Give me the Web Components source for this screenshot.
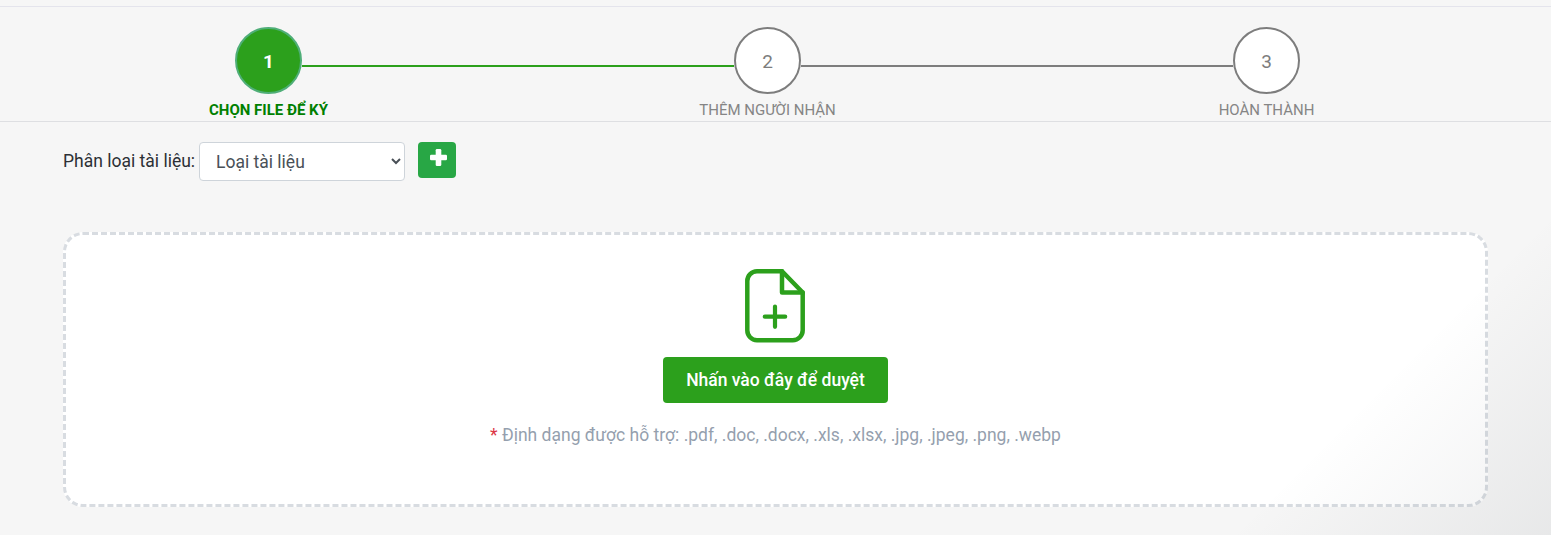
<!DOCTYPE html>
<html lang="vi"><head><meta charset="utf-8"><title>Chọn file để ký</title>
<style>
html,body{margin:0;padding:0;height:535px;overflow:hidden;background:#f6f6f6;font-family:Roboto,"Noto Sans",sans-serif}
</style></head><body>
<app-page>
  <step-bar></step-bar>
  <doc-type></doc-type>
  <drop-zone></drop-zone>
</app-page>
<script>
function def(name,html){customElements.define(name,class extends HTMLElement{constructor(){super();this.attachShadow({mode:'open'}).innerHTML=html}})}
def('app-page',`<style>:host{display:block;position:relative;height:535px;box-sizing:border-box;padding-top:6px;overflow:hidden}
.shade{position:absolute;left:0;top:0;right:0;bottom:0;pointer-events:none;background:linear-gradient(135deg,rgba(0,0,0,0) 0,rgba(0,0,0,0) 84.5%,rgba(30,40,50,.065) 100%)}</style><slot></slot><div class="shade"></div>`);
customElements.define('step-bar',class extends HTMLElement{constructor(){super();
const s=[['1','CHỌN FILE ĐỂ KÝ',1],['2','THÊM NGƯỜI NHẬN',0],['3','HOÀN THÀNH',0]];
this.attachShadow({mode:'open'}).innerHTML=`<style>
:host{display:block;height:116px;box-sizing:border-box;border-top:1px solid #e4e4ec;border-bottom:1px solid #dedfe2;padding:20px 36px 0 18px}
.track{display:flex;align-items:center;padding:0 215px 0 217px;height:67px}
.c{flex:none;width:67px;height:67px;box-sizing:border-box;border:2px solid #7d7d7d;border-radius:50%;background:#fff;color:#7d7d7d;font-size:19px;display:flex;align-items:center;justify-content:center;padding-top:2px}
.c.on{background:#2ca01c;border-color:#4fae78;color:#fff;font-weight:700}
.l{flex:1;height:2px;background:#7d7d7d;margin-top:11px;align-self:center}
.l.on{background:#2ca01c}
.labels{display:grid;grid-template-columns:repeat(3,499px);margin:7px 0 0 1px}
.t{text-align:center;font-size:15px;line-height:18px;color:#858585}
.t.on{color:green;font-weight:700}
</style><div class="track">
<div class="c on">1</div><div class="l on"></div><div class="c">2</div><div class="l"></div><div class="c">3</div></div>
<div class="labels">${s.map(x=>`<div class="t ${x[2]?'on':''}">${x[1]}</div>`).join('')}</div>`}});
def('doc-type',`<style>:host{display:flex;align-items:flex-start;height:110px;box-sizing:border-box;padding:20px 0 0 63px;color:#2c3035;font-size:17.5px}
label{line-height:39px;margin-right:4px;width:132px;white-space:nowrap}
select{width:206px;height:39px;box-sizing:border-box;border:1px solid #ced4da;border-radius:4px;background:#fff;color:#495057;font:17.5px Roboto,sans-serif;padding:6px 12px;margin:0}
button{margin-left:13px;width:38px;height:36px;border:0;border-radius:4px;background:#28a745;display:flex;align-items:center;justify-content:center;padding:0 0 5px 2px}
</style><label>Phân loại tài liệu:</label><select><option>Loại tài liệu</option></select>
<button aria-label="Thêm"><svg width="17" height="17" viewBox="0 0 17 17" fill="#fff"><rect x="5.700" y="0" width="5.600" height="17" rx="1.300"/><rect x="0" y="5.700" width="17" height="5.600" rx="1.300"/></svg></button>`);
def('drop-zone',`<style>:host{display:flex;flex-direction:column;align-items:center;margin-left:63px;width:1425px;height:275px;box-sizing:border-box;border:3px dashed #d8dce1;border-radius:20px;background:#fff;padding-top:34px}
svg{display:block;margin-right:1px}
button{margin-top:13px;width:225px;height:46px;border:0;border-radius:4px;background:#2ca01c;color:#fff;font:500 17.5px Roboto,sans-serif;padding:0}
p{margin:20px 0 0;font-size:17.5px;line-height:24px;color:#959fae}
b{font-weight:400;color:#dc3545}
</style><svg width="60" height="75" viewBox="0 0 60 75" fill="none" stroke="#2ca01c" stroke-width="4.500" stroke-linejoin="round" stroke-linecap="round">
<path d="M12 2.300H37L57.700 23.500V61A10 10 0 0 1 47.700 71.200H12A9.700 10 0 0 1 2.300 61V12A9.700 9.700 0 0 1 12 2.300Z"/><path d="M37 2.300V23.500H57.700"/><path stroke-width="4.200" d="M30 37.500V57.800M19.800 47.700H40.200"/></svg>
<button>Nhấn vào đây để duyệt</button><p><b>*</b> Định dạng được hỗ trợ: .pdf, .doc, .docx, .xls, .xlsx, .jpg, .jpeg, .png, .webp</p>`);
</script></body></html>
